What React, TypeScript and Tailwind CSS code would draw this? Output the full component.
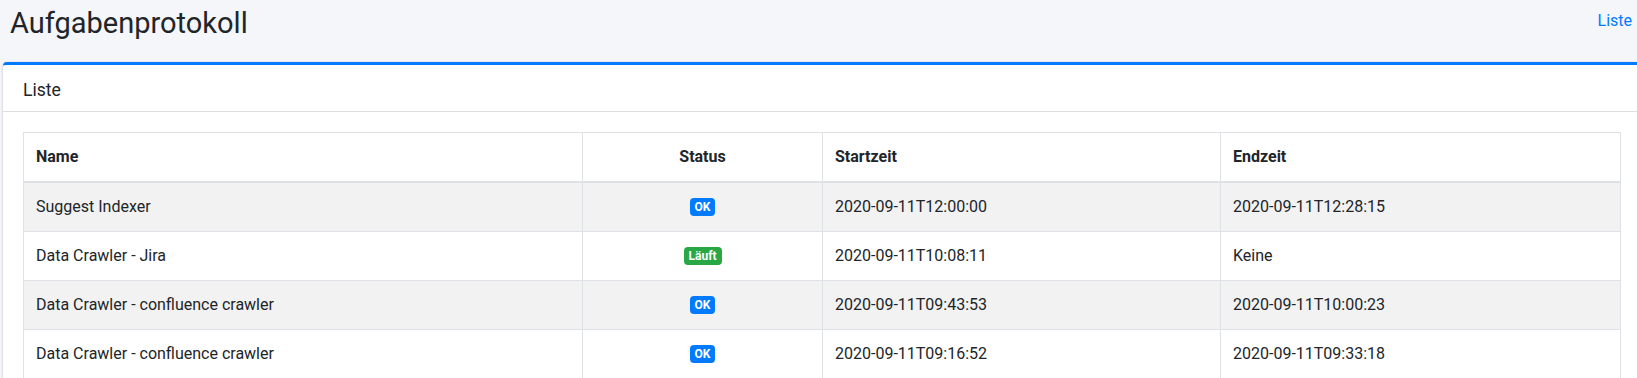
import React from "react";

type Row = { name: string; status: "ok" | "run"; start: string; end: string };

const rows: Row[] = [
  { name: "Suggest Indexer", status: "ok", start: "2020-09-11T12:00:00", end: "2020-09-11T12:28:15" },
  { name: "Data Crawler - Jira", status: "run", start: "2020-09-11T10:08:11", end: "Keine" },
  { name: "Data Crawler - confluence crawler", status: "ok", start: "2020-09-11T09:43:53", end: "2020-09-11T10:00:23" },
  { name: "Data Crawler - confluence crawler", status: "ok", start: "2020-09-11T09:16:52", end: "2020-09-11T09:33:18" },
];

function Badge({ status }: { status: Row["status"] }) {
  if (status === "ok") {
    return (
      <span className="inline-block rounded-[4px] bg-[#007bff] px-[5px] py-[3px] text-[12px] font-bold leading-[12px] text-white">
        OK
      </span>
    );
  }
  return (
    <span className="inline-block rounded-[4px] bg-[#28a745] px-[5px] py-[3px] text-[12px] font-bold leading-[12px] text-white">
      Läuft
    </span>
  );
}

export default function App() {
  return (
    <div
      className="h-[378px] w-[1637px] overflow-hidden bg-[#f4f6f9] text-[#212529]"
      style={{ fontFamily: "Roboto, 'Liberation Sans', sans-serif" }}
    >
      <div className="flex h-[62px] items-start justify-between">
        <h1 className="m-0 pl-[10px] pt-[9px] text-[29px] font-normal leading-[29px]">Aufgabenprotokoll</h1>
        <a className="pr-[5px] pt-[9px] text-[16px] leading-[24px] text-[#007bff]">Liste</a>
      </div>
      <div className="ml-[3px] w-[1637px] rounded-t-[4px] border-t-[3px] border-[#007bff] bg-white shadow-[0_0_1px_rgba(0,0,0,0.125),0_1px_3px_rgba(0,0,0,0.2)]">
        <div className="border-b border-[#dfdfdf] px-[20px] pb-[9px] pt-[13px] text-[17.6px] leading-[24px]">Liste</div>
        <div className="px-[20px] pt-[20px]">
          <table className="w-[1597px] table-fixed border-collapse border border-[#dee2e6] text-[16px] leading-[24px]">
            <colgroup>
              <col className="w-[559px]" />
              <col className="w-[240px]" />
              <col className="w-[398px]" />
              <col className="w-[400px]" />
            </colgroup>
            <thead>
              <tr>
                <th className="border border-b-2 border-[#dee2e6] p-3 text-left font-bold">Name</th>
                <th className="border border-b-2 border-[#dee2e6] p-3 text-center font-bold">Status</th>
                <th className="border border-b-2 border-[#dee2e6] p-3 text-left font-bold">Startzeit</th>
                <th className="border border-b-2 border-[#dee2e6] p-3 text-left font-bold">Endzeit</th>
              </tr>
            </thead>
            <tbody>
              {rows.map((r, i) => (
                <tr key={i} className={i % 2 === 0 ? "bg-[#f2f2f2]" : "bg-white"}>
                  <td className="border border-[#dee2e6] p-3">{r.name}</td>
                  <td className="border border-[#dee2e6] p-3">
                    <div className="flex h-6 items-center justify-center">
                      <Badge status={r.status} />
                    </div>
                  </td>
                  <td className="border border-[#dee2e6] p-3">{r.start}</td>
                  <td className="border border-[#dee2e6] p-3">{r.end}</td>
                </tr>
              ))}
            </tbody>
          </table>
        </div>
      </div>
    </div>
  );
}
